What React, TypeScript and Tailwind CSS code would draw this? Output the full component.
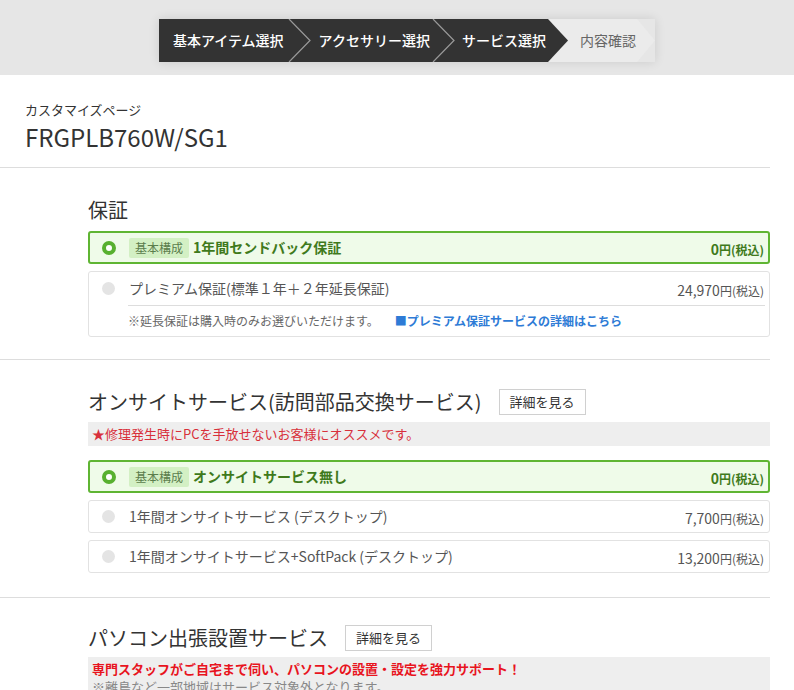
import React from 'react';

const font = { fontFamily: '"Noto Sans CJK JP", "Noto Sans", sans-serif' };

function Chevron() {
  return (
    <svg width="26" height="43" viewBox="0 0 26 43" className="block shrink-0">
      <rect width="26" height="43" fill="#333333" />
      <polyline points="1,0 22,21.5 1,43" fill="none" stroke="#9a9a9a" strokeWidth="1.2" />
    </svg>
  );
}

function Breadcrumb() {
  return (
    <div className="flex items-stretch h-[43px] shadow-[0_0_10px_rgba(0,0,0,0.12)]">
      <div className="flex items-center bg-[#333333] text-white text-[14px] font-medium pl-[14px] pr-[4px]">基本アイテム選択</div>
      <Chevron />
      <div className="flex items-center bg-[#333333] text-white text-[14px] font-medium pl-[5px] pr-[2px]">アクセサリー選択</div>
      <Chevron />
      <div className="flex items-center bg-[#333333] text-white text-[14px] font-medium pl-[4px] pr-[2px]">サービス選択</div>
      <svg width="20" height="43" viewBox="0 0 20 43" className="block shrink-0">
        <rect width="20" height="43" fill="#ebebeb" />
        <polygon points="0,0 20,21.5 0,43" fill="#333333" />
      </svg>
      <div className="flex items-center bg-[#ebebeb] text-[#666] text-[14px] pl-[12px] pr-[1px]">内容確認</div>
      <svg width="18" height="43" viewBox="0 0 18 43" className="block shrink-0">
        <polygon points="0,0 18,21.5 0,43" fill="#ebebeb" />
      </svg>
    </div>
  );
}

function Radio({ on }: { on?: boolean }) {
  return on ? (
    <span className="block w-[14px] h-[14px] rounded-full border-[4px] border-[#58b030] bg-white shrink-0" />
  ) : (
    <span className="block w-[13px] h-[13px] rounded-full bg-[#e4e4e4] shrink-0" />
  );
}

function Price({ value, bold }: { value: string; bold?: boolean }) {
  return bold ? (
    <span className="font-bold text-[#3f7a1c] whitespace-nowrap">
      <span className="text-[14px]">{value}</span>
      <span className="text-[12px]">円(税込)</span>
    </span>
  ) : (
    <span className="text-[#555] whitespace-nowrap">
      <span className="text-[14px]">{value}</span>
      <span className="text-[12px]">円(税込)</span>
    </span>
  );
}

function Selected({ label }: { label: string }) {
  return (
    <div className="flex items-center h-[33px] border-2 border-[#5fb533] rounded-[3px] bg-[#effbe9] pl-[12px] pr-[4px]">
      <Radio on />
      <span className="ml-[13px] bg-[#d3f0c4] text-[#5b7d4c] text-[12px] px-[6px] h-[20px] flex items-center rounded-[2px]">基本構成</span>
      <span className="ml-[4px] text-[14px] font-bold text-[#3f7a1c]">{label}</span>
      <span className="ml-auto">
        <Price value="0" bold />
      </span>
    </div>
  );
}

function Option({ label, price }: { label: string; price: string }) {
  return (
    <div className="flex items-center h-[33px] border border-[#e2e2e2] rounded-[3px] bg-white pl-[13px] pr-[5px]">
      <Radio />
      <span className="ml-[14px] text-[14px] text-[#555]">{label}</span>
      <span className="ml-auto">
        <Price value={price} />
      </span>
    </div>
  );
}

function DetailButton() {
  return (
    <span className="ml-[17px] inline-flex items-center h-[26px] px-[10px] border border-[#d0d0d0] bg-white text-[13px] text-[#333]">詳細を見る</span>
  );
}

export default function App() {
  return (
    <div style={font} className="w-[794px] min-h-[690px] bg-white text-[#333] overflow-hidden">
      {/* ステップ表示 */}
      <div className="h-[75px] bg-[#e6e6e6] flex items-start pl-[159px] pt-[19px]">
        <Breadcrumb />
      </div>

      <div className="w-[770px]">
        {/* タイトル */}
        <div className="pl-[25px] pt-[25px] pb-[13px] border-b border-[#dddddd]">
          <div className="text-[13px] leading-[20px] text-[#333]">カスタマイズページ</div>
          <div className="text-[24px] leading-[34px] text-[#333]">FRGPLB760W/SG1</div>
        </div>

        {/* 保証 */}
        <div className="pl-[88px] pt-[27px] pb-[22px] border-b border-[#dddddd]">
          <h2 className="text-[20px] leading-[30px] mb-[6px]">保証</h2>
          <div className="flex flex-col gap-[7px]">
            <Selected label="1年間センドバック保証" />
            <div className="border border-[#e2e2e2] rounded-[3px] bg-white">
              <div className="flex items-center h-[33px] pl-[13px] pr-[5px]">
                <Radio />
                <span className="ml-[14px] text-[14px] text-[#555]">プレミアム保証(標準１年＋２年延長保証)</span>
                <span className="ml-auto">
                  <Price value="24,970" />
                </span>
              </div>
              <div className="ml-[39px] mr-[4px] border-t border-[#dddddd] h-[31px] flex items-center text-[12px]">
                <span className="text-[#666]">※延長保証は購入時のみお選びいただけます。</span>
                <span className="ml-[16px] font-bold text-[#2e7bd6]">■プレミアム保証サービスの詳細はこちら</span>
              </div>
            </div>
          </div>
        </div>

        {/* オンサイト */}
        <div className="pl-[88px] pt-[29px] pb-[24px] border-b border-[#dddddd]">
          <div className="flex items-center h-[26px] mb-[7px]">
            <h2 className="text-[20px] leading-[26px]">オンサイトサービス(訪問部品交換サービス)</h2>
            <DetailButton />
          </div>
          <div className="bg-[#eeeeee] h-[24px] flex items-center pl-[4px] text-[13px] text-[#d8303b] mb-[14px]">★修理発生時にPCを手放せないお客様にオススメです。</div>
          <div className="flex flex-col gap-[7px]">
            <Selected label="オンサイトサービス無し" />
            <Option label="1年間オンサイトサービス (デスクトップ)" price="7,700" />
            <Option label="1年間オンサイトサービス+SoftPack (デスクトップ)" price="13,200" />
          </div>
        </div>

        {/* 出張設置 */}
        <div className="pl-[88px] pt-[27px]">
          <div className="flex items-center h-[26px] mb-[6px]">
            <h2 className="text-[20px] leading-[26px]">パソコン出張設置サービス</h2>
            <DetailButton />
          </div>
          <div className="bg-[#eeeeee] pl-[4px] pt-[3px] pb-[6px] text-[13px] leading-[18px]">
            <div className="font-bold text-[#e8141e]">専門スタッフがご自宅まで伺い、パソコンの設置・設定を強力サポート！</div>
            <div className="text-[#888]">※離島など一部地域はサービス対象外となります。</div>
          </div>
        </div>
      </div>
    </div>
  );
}
